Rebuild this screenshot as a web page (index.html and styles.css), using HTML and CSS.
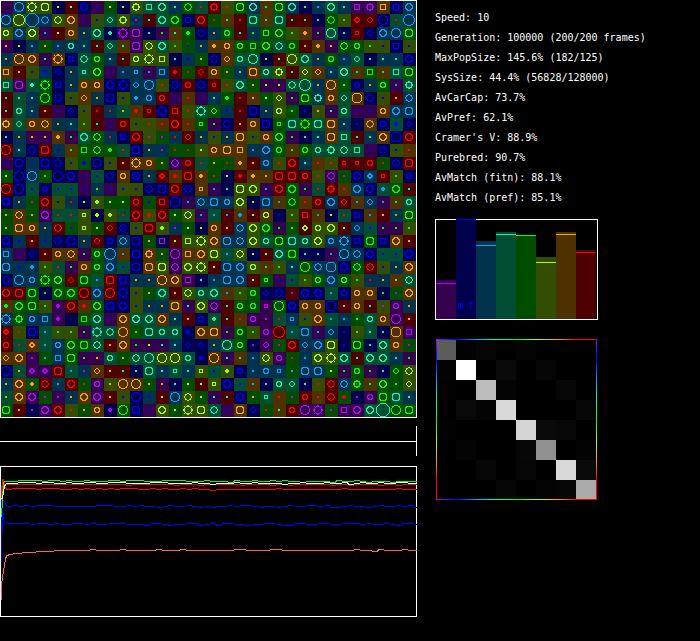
FILE: index.html
```
<!DOCTYPE html>
<html lang="en">
<head>
    <meta charset="UTF-8">
    <meta name="viewport" content="width=device-width, initial-scale=1.0">
    <title>Population Simulation</title>
    <link rel="stylesheet" href="styles.css">
</head>
<body>

    <main class="layout">
        <section class="world">
            <svg id="grid" class="grid" width="417" height="418" role="img" aria-label="World"></svg>
            <div class="timeline"></div>
            <svg id="chart" class="chart" width="417" height="151" role="img" aria-label="History"></svg>
        </section>

        <aside class="panel">
            <ul class="stats">
                <li>Speed: 10</li>
                <li>Generation: 100000 (200/200 frames)</li>
                <li>MaxPopSize: 145.6% (182/125)</li>
                <li>SysSize: 44.4% (56828/128000)</li>
                <li>AvCarCap: 73.7%</li>
                <li>AvPref: 62.1%</li>
                <li>Cramer's V: 88.9%</li>
                <li>Purebred: 90.7%</li>
                <li>AvMatch (fitn): 88.1%</li>
                <li>AvMatch (pref): 85.1%</li>
            </ul>
            <div id="bars" class="bars"></div>
            <svg id="matrix" class="matrix" width="161" height="161" role="img" aria-label="Match matrix"></svg>
        </aside>
    </main>

    <script src="script.js"></script>

</body>
</html>
```
FILE: styles.css
```
body {
    margin: 0;
    background-color: #000;
    color: #fff;
    font-family: "DejaVu Sans Mono", "Liberation Mono", monospace;
    font-size: 10px;
}
svg {
    display: block;
    shape-rendering: crispEdges;
}
.layout {
    display: flex;
    align-items: flex-start;
    gap: 18px;
}
.world {
    flex: none;
}
.panel {
    flex: 1;
    padding-top: 8px;
}
.timeline {
    height: 30px;
    margin: 8px 0 10px;
    border-right: 1px solid #fff;
    background: linear-gradient(#fff, #fff) 0 15px / 100% 1px no-repeat;
}
.stats {
    list-style: none;
    margin: 0 0 11px;
    padding: 0;
    line-height: 20px;
    white-space: nowrap;
}
.bars {
    display: flex;
    align-items: flex-end;
    width: 161px;
    height: 99px;
    border: 1px solid #fff;
}
.bar {
    display: flex;
    flex-direction: column;
    box-sizing: border-box;
    width: 20px;
}
.mark {
    height: 1px;
}
.sexes {
    display: flex;
    justify-content: space-around;
    margin-top: auto;
    padding-bottom: 6px;
    line-height: 14px;
    color: #00f;
}
.matrix {
    margin: 19px 0 0 1px;
}

/* hue classes: bright for glyphs, dark for backgrounds */
.fill-P { fill: #b400ff; }
.fill-B { fill: #0000ff; }
.fill-S { fill: #00a5ff; }
.fill-T { fill: #00ffa8; }
.fill-G { fill: #00ff00; }
.fill-L { fill: #a8ff00; }
.fill-O { fill: #ffa500; }
.fill-R { fill: #ff0000; }
.dark-P { fill: #35004d; background-color: #35004d; }
.dark-B { fill: #00004d; background-color: #00004d; }
.dark-S { fill: #00314d; background-color: #00314d; }
.dark-T { fill: #004d33; background-color: #004d33; }
.dark-G { fill: #004d00; background-color: #004d00; }
.dark-L { fill: #324d00; background-color: #324d00; }
.dark-O { fill: #4d3200; background-color: #4d3200; }
.dark-R { fill: #4d0000; background-color: #4d0000; }
.mark-P { background-color: #b400ff; }
.mark-B { background-color: #0000ff; }
.mark-S { background-color: #00a5ff; }
.mark-T { background-color: #00ffa8; }
.mark-G { background-color: #00ff00; }
.mark-L { background-color: #a8ff00; }
.mark-O { background-color: #ffa500; }
.mark-R { background-color: #ff0000; }
.frame {
    fill: none;
    stroke: #fff;
}
.series {
    fill: none;
    stroke-width: 1;
}
.line-R { stroke: #ff0000; }
.line-G { stroke: #00ff00; }
.line-B { stroke: #0000ff; }
.line-white { stroke: #fff; }
.line-salmon { stroke: #ff6464; }
```
FILE: script.js
```
// one token per cell: background hue, glyph hue, glyph
const world = `
PP- SSC LLG LLu BL. RL. BBc PB. GL. BL. LLg TTq TTc ST. GGD TR. RRg LR. GGu STc OG. GGu STc BT. SS. TTc ST. PPq PPg OOq BBg SSc
SSC LLO SSX SSD LLD OOc PB. LB. TTd LLg SP. RT. TTc GGc BBq RRc GR. OG. RR. TTu OG. TTu RT. RT. BT. GGD LG. RRr RRd BBC TR. SSO
LLo SSc LLc PS. RL. OOo SO. TTc BT+ PPG PPu BT. PG. OT. GG+ BBD SO. GGo RT. SG. GGq GGc LG. OO+ PG. TTC BT. RRs BBd SSc SSC GGu
PO. BL. SS. GO. SS. STk ST. RT. TTd OT. PPu LLD TTc LG. GB. SO. OO+ OOk GGo GGq GGc TTD GGo RO. OO+ PO. GGD GGo LG. LB. BBq LB.
SO. OOC OOc PT. OOG BBk TTD GGo ST. RT. LLo LLG LLq BT. SB. GO. BBD OOd TTo TTC BL. RL. LLC TTc SO. GGo SS. TTd BT. ST. ST. BBc
OOq RO. LB. SBs BBd SO. TTs GGc PB. SS. SSs PS. SSq RR+ GR. RRd OOo GO. ST. OOu TTo LLg RT. LLd OOd ST. TTc OG. GGq OG. TTq GGu
TTq PPu TT+ GGG BBq SO. OOo OOo BBc BBG SSd SSC LR. BBD RRo BBD RRs LR. TTc GO. PL. PL. TTD TTO SO. OOC GT. BBo SO. GGo PS. TTg
RT. TT. ST. GGC BBD LB. OOd SO. BBu LB. SS+ SSk RRo PB. OR. PB. ST. GG+ RR. OO. GL. LLd PG. GGu STg OOo TTd OOU BBD LB. RO. SSD
RT. TTo ST. RO. PB. BBd LB. RR. SR. TO. OR+ RRs BBG RRq LR. TTG GGd SB. RR. BBu SO. LLo GG. BB. LO. PT. TTo PB. PB. OOo SSc SSu
OOg TTd OOo OOD SO. ST. LG. RT. PB. RRo LB. LR. OR. RRc OR. GGs PG. BBD RO. OOo BBu GGs TTu GGG TTu OOu ST. BB. OOD BBo TB+ BBd
BT. SO. PO. PO. OO+ PG. TTc GGD SR. BBo RRc LP. GP. SR. RRd SO. LB. SO. OOu LB. OOo GGc PG. BT. ST. OOu TTq RT. ST. OOc BBU RRc
RRC ST. BBD RRu SB. OG. GGq GGD GG+ TR. BBu SO. SP. GR. GR. LL. OOk OOu OOq SS. SSc GGk OG. GGo TTk TTg TTD TTq PB. BBD LB. OR.
PB. BBu SB. BBu BBD LB. GB+ BBu LB. RO. OOG OOo GO. PPD RRo TR. GO. GR. OO+ RO. SSo LR. RRc ST. OR. LR. RRs RRs RRk GR. BBD RRu
GL. BBC SSC GG. BBC BBc PB. TB. BBD OOo BBc SO. RRr OR+ RRu OO+ GR. BL. RR+ OO+ OO. RRu RRu RRo LR. PPD GP. BBc SSr RRs LG. BBo
RRC BBC TB. BBk TB. TB. PB. SG. PB. LB. LB. BBD BBu RRc BBD OOs PS. BT. LLu LLc PS. RRc GGc PG. TR. RRg OR. SSc BBc TS+ GGc RT.
BBc SO. GP. RRc LB. SR. BL. LL+ GL. GL. RRo GB. RRq BBU PS. SSD SSu SSo LLc BL. SSu OS. GGD OR. RRo SSc RRd OS. SSd PS. OG. TTo
GO. OOD GO. PPc TR. TR. LLs BL+ LL+ TR. RRc LR+ RRc GL. LLD PS. TS. RS. OS+ RL. OLo BB. LG. RRq OS. BL. TR. BBo OS. RO. SG. GGu
GO. OOu OOo SO. RRD GB. LLs GL. RRd BBD LB. RRu LL+ SP. GL. BL. OOo RO. SSD LLc GGc PG. GG. RLr LLo LLc RL. SSd TB. PG. PG. LG.
BBc SB. RO. SB. BBD BBu SO. RRd BBo SSD BBu GO. BPq RL. LLq LLG OOc SSu SSD LLc TTo GGu TTu TTo LLc SSo SSG BBo GGu BBq OOc RO.
SSq PB. BBd RO. OOo OOD PG. GGo SSO OS. BBu OOg GO. PPC OOq OOc LLu TS. LLD BL. RL. TTc GGu BT. BT. PS. SSC SSD BBc TB. TB. BBc
SSu SB. SS+ LG. TR. PG. OOo GGo SSc TB. BBu OOu LLu PPD LLc LLG RL. SSu SSc LLo OG. LG. ST. GGC SSD SSU BBc GGD RRD LB. SO. OOc
BBD SSC SSo GGG GGc RRd GGu TS. RRu BBc SO. SO. OOC OOc PPq BT. SS. SSu SSc RL. GGs PB. TB. LG. GGo SSc GGo LG. SR. SO. OO. TTD
RRc RRu GGu BG. GGc GGc RRC SSc RRC BBG LB. GO. TTc RO. LLD TTo TTc OS. LG. GGo BBd BBD RP. BBc BBc TS. BBo OOo OOo BG. GP. OOc
OG+ GGc GGu LG. PP+ RRc OR+ GGc BBu BBc LB. SO. SO. OOu PT. LLc PPD RT. GGo GGo PPs GGC BBc OOo OOo BBU RO. OOo RT. LP. PPo SO.
SSG GGg SSo SSq PP+ BB- GGq TTc PB. OOc TTc TTc OOc ST. RO. BBk TT+ RT. OR. PPk PP. TR. SSs LB. OOc TS. SS. GG. TTk OOo PPC RO.
RRr LR. BBu TS. LG. LG. PG. TTG TTD OOC GG. TTu TTo TTo BB+ OOc OOu PG. GGo LG. PPo RRO TS. SSu PS. SSd BB. LG. TT. BT. OOU PPq
RRo TR. OOr TS. SSo GGc GGu TTD RO. OOc PG. PL. PT. ST. BBd BBd SO. TTC GGo BP. PPd GP. RRc SSd SSc LLu BB. GGu BT. TTc OOo GP.
OOd OOc PP. GS. SSq GGu PG. PO. TTo GO. TTD TTC LLC LLC TTo BB+ OOC PT. OG. SS. LLD PPo GR. SS. LLc LLG TTc RT. TTc TTc ST. PG.
BBC TO. PPr PPr RRu TS. SP. OOd RO. RT. BT. TTu ST. TTs ST. LLs TB. LL+ BBk SS. SSo SSs GS. SSu SSu GL. PG. GGo PG. BT. GGd LLD
SO. OOc GO+ RRD SS. RRc GR. PPo LO. OOC OOC GO. PO. BT. GL. RL. LLs BBc TB. OS. BT. TTo TTd BT. LR. RRD SSD GGg OG. GGc GG. LLd
TO. OOc PPc GP. PP. SO. OOc PPc RO. LB. BBC SB. RL. SSC LLD GL. PT. RT. BBc GO. TTs OR. GP. RRo OR. RRD GR+ BP. PPo GGu TTu ST.
GGu RO. BP. PPc RRc LR. GO. OOo BP+ GGC BBu PB. LLc GL. LLG LLu TTD PB. OOu BBd GR. OT. RRo PPC PPG GP. PPq PPc TTc TTX GGC GGu
`.trim().split('\n').map(row => row.split(' '));

// lit pixels of one eighth of each glyph as "xy" pairs, the rest is mirrored
const glyphs = {
    '.': '00',
    '+': '00 10',
    s: '10 11',
    r: '10 11 20',
    k: '11 20 21',
    d: '11 20',
    o: '11 20 21',
    q: '20 21 22',
    g: '20 21 22 30',
    D: '21 22 30',
    c: '21 22 30 31',
    u: '22 30 31 32',
    G: '22 30 31 33 40',
    C: '32 33 40 41',
    U: '33 40 41 42',
    O: '42 43 50 51',
    X: '44 53 60 61 62'
};

function glyphPath(glyph) {
    const cells = new Set();
    glyphs[glyph].split(' ').forEach(pair => {
        const [a, b] = [...pair].map(Number);
        [[a, b], [b, a]].forEach(([x, y]) => {
            [x, -x - 1].forEach(px => [y, -y - 1].forEach(py => cells.add(`M${px} ${py}h1v1h-1z`)));
        });
    });
    return [...cells].join('');
}

function drawGrid() {
    let out = '';
    world.forEach((row, j) => {
        row.forEach(([bg, fg, glyph], i) => {
            out += `<rect class="dark-${bg}" x="${i * 13}" y="${j * 13 + 1}" width="13" height="13"/>`;
        });
    });
    // glyphs come last, the largest ones reach over their neighbours
    world.forEach((row, j) => {
        row.forEach(([bg, fg, glyph], i) => {
            if (glyphs[glyph]) {
                out += `<path class="fill-${fg}" transform="translate(${i * 13 + 6} ${j * 13 + 7})" d="${glyphPath(glyph)}"/>`;
            }
        });
    });
    out += '<rect class="frame" x=".5" y=".5" width="416" height="417"/>';
    document.getElementById('grid').innerHTML = out;
}

// start: first points of the line, base: level after that,
// wave: offset from the base (in pixels, 1 = on the base), one digit every 6px
const history = [
    { hue: 'R', start: [[2, 50], [2, 13], [4, 18]], base: 18, wave: '111111111111111111112111111121112111111211112112111111211211112112111' },
    { hue: 'R', start: [[1, 33], [1, 22], [3, 13], [5, 21]], base: 23, wave: '100001000110101010100011010110101121111111111011111111110111111110111' },
    { hue: 'B', start: [[1, 95], [1, 35], [3, 34], [5, 37]], base: 40, wave: '101010001111111000110101121011012121101001211210110010221011210110102' },
    { hue: 'B', start: [[2, 65], [2, 40], [3, 53], [5, 56]], base: 58, wave: '000010010110010110001112001211002102001121100122001100110001011012001' },
    { hue: 'salmon', start: [[1, 133], [1, 119], [2, 110], [4, 99], [5, 93], [6, 89], [10, 88], [16, 87], [28, 86], [44, 85]], base: 84, wave: '111112121111110111101111101110111111110011110011111111111101120111011' },
    { hue: 'G', start: [[1, 51], [2, 33], [3, 16], [4, 15]], base: 15, wave: '110000100101101110010001110000111011120110110101121111201101211121111' },
    { hue: 'white', start: [[1, 33], [2, 31], [3, 26], [4, 20], [5, 18]], base: 17, wave: '110001001101100110001111000111101121110110111121101110110210110110011' }
];

function drawChart() {
    let out = '<rect class="frame" x=".5" y=".5" width="416" height="150"/>';
    history.forEach(line => {
        const points = line.start.map(([x, y]) => `${x + 0.5},${y + 0.5}`);
        const last = line.start[line.start.length - 1][0];
        [...line.wave].forEach((digit, i) => {
            const x = 6 + i * 6;
            const y = line.base + Number(digit) - 0.5;
            if (x > last) {
                points.push(`${x + 1},${y}`, `${x + 5},${y}`);
            }
        });
        out += `<polyline class="series line-${line.hue}" points="${points.join(' ')}"/>`;
    });
    document.getElementById('chart').innerHTML = out;
}

// hue, bar height, distance of the mark from the top of the bar
const bars = [
    ['P', 39, 3], ['B', 100, 0], ['S', 78, 4], ['T', 87, 2],
    ['G', 84, 0], ['L', 62, 5], ['O', 87, 2], ['R', 69, 2]
];

function drawBars() {
    document.getElementById('bars').innerHTML = bars.map(([hue, height, top]) =>
        `<div class="bar dark-${hue}" style="height: ${height}px; padding-top: ${top}px">
            <div class="mark mark-${hue}"></div>
            ${hue === 'B' ? '<div class="sexes"><span>m</span><span>f</span></div>' : ''}
        </div>`
    ).join('');
}

// grey level of each pair
const matches = [
    [92, 2, 5, 0, 4, 0, 0, 0],
    [3, 255, 0, 10, 0, 5, 0, 0],
    [2, 0, 188, 4, 0, 0, 7, 0],
    [0, 9, 4, 218, 0, 0, 0, 7],
    [2, 0, 0, 0, 213, 10, 8, 0],
    [0, 4, 0, 0, 7, 144, 0, 3],
    [0, 0, 6, 0, 6, 0, 218, 10],
    [0, 0, 0, 5, 0, 4, 6, 171]
];

function drawMatrix() {
    const hues = ['#b400ff', '#0000ff', '#00a5ff', '#00ffa8', '#00ff00', '#a8ff00', '#ffa500', '#ff0000'];
    const stops = hues.map((c, i) => `<stop offset="${i / 8}" stop-color="${c}"/>`).join('');
    let out = `<defs><linearGradient id="across">${stops}</linearGradient>
        <linearGradient id="down" x2="0" y2="1">${stops}</linearGradient></defs>`;
    matches.forEach((row, j) => {
        row.forEach((v, i) => {
            out += `<rect x="${i * 20}" y="${j * 20 + 1}" width="20" height="20" fill="rgb(${v},${v},${v})"/>`;
        });
    });
    out += '<rect width="161" height="1" fill="url(#across)"/><rect y="160" width="161" height="1" fill="url(#across)"/>';
    out += '<rect width="1" height="161" fill="url(#down)"/><rect x="160" width="1" height="161" fill="url(#down)"/>';
    document.getElementById('matrix').innerHTML = out;
}

drawGrid();
drawChart();
drawBars();
drawMatrix();
```
